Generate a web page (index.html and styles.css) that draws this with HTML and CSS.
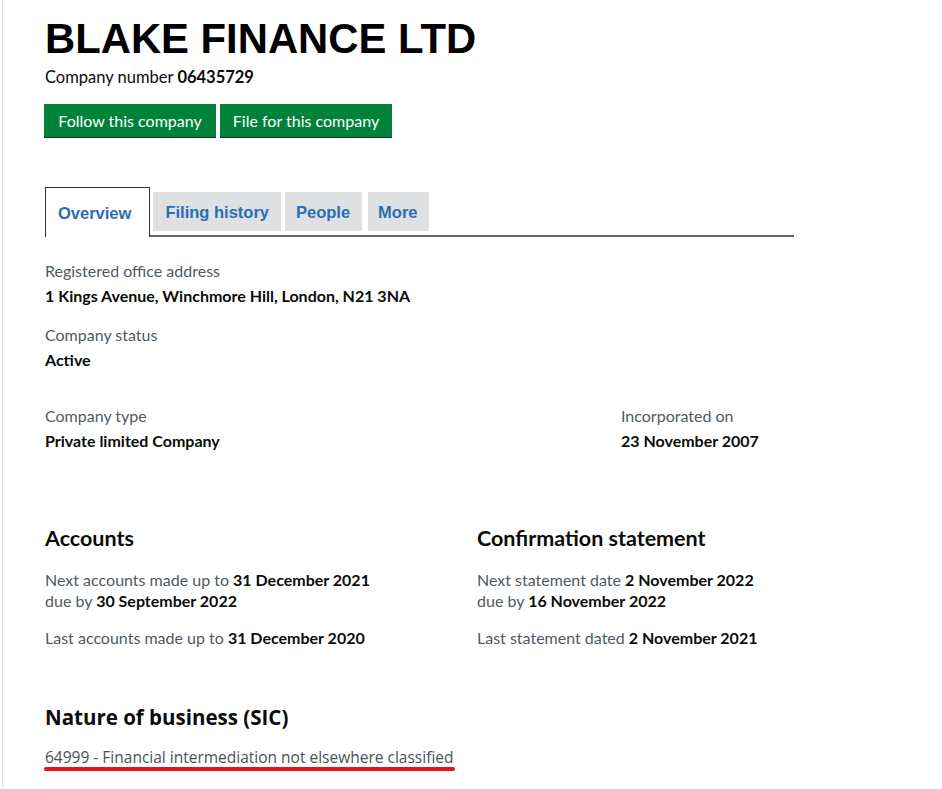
FILE: index.html
```html
<!DOCTYPE html>
<html lang="en">
<head>
<meta charset="utf-8">
<title>BLAKE FINANCE LTD</title>
<link rel="stylesheet" href="styles.css">
</head>
<body>
<div class="page">
  <h1 class="company-name">BLAKE FINANCE LTD</h1>
  <p class="company-number">Company number <strong>06435729</strong></p>
  <div class="actions">
    <a class="button" href="#">Follow this company</a>
    <a class="button" href="#">File for this company</a>
  </div>

  <ul class="tabs">
    <li class="tab tab-active"><a href="#">Overview</a></li>
    <li class="tab"><a href="#">Filing history</a></li>
    <li class="tab tab-people"><a href="#">People</a></li>
    <li class="tab tab-more"><a href="#">More</a></li>
  </ul>

  <div class="stack">
    <dl class="field">
      <dt>Registered office address</dt>
      <dd>1 Kings Avenue, Winchmore Hill, London, N21 3NA</dd>
    </dl>
    <dl class="field">
      <dt>Company status</dt>
      <dd>Active</dd>
    </dl>
  </div>

  <div class="row row-thirds">
    <dl class="field">
      <dt>Company type</dt>
      <dd>Private limited Company</dd>
    </dl>
    <dl class="field">
      <dt>Incorporated on</dt>
      <dd>23 November 2007</dd>
    </dl>
  </div>

  <div class="row row-halves">
    <section class="block">
      <h2 class="heading">Accounts</h2>
      <p class="line">Next accounts made up to <strong>31 December 2021</strong><br>due by <strong>30 September 2022</strong></p>
      <p class="line">Last accounts made up to <strong>31 December 2020</strong></p>
    </section>
    <section class="block">
      <h2 class="heading">Confirmation statement</h2>
      <p class="line">Next statement date <strong>2 November 2022</strong><br>due by <strong>16 November 2022</strong></p>
      <p class="line">Last statement dated <strong>2 November 2021</strong></p>
    </section>
  </div>

  <h2 class="heading heading-sic">Nature of business (SIC)</h2>
  <p class="sic"><span class="sic-item">64999 - Financial intermediation not elsewhere classified</span></p>
</div>
</body>
</html>
```

FILE: styles.css
```css
* { box-sizing: border-box; }

html, body {
  margin: 0;
  padding: 0;
  background: #ffffff;
}

body {
  font-family: "Lato", "Liberation Sans", Arial, sans-serif;
  color: #0b0c0c;
}

.page {
  margin-left: 2px;
  border-left: 1px solid #e6e6e6;
  padding-left: 42px;
  padding-top: 18px;
  min-height: 789px;
}

.company-name {
  font-family: "Liberation Sans", Arial, sans-serif;
  font-weight: 700;
  font-size: 41.8px;
  line-height: 42px;
  margin: 0;
  color: #000;
}

.company-number {
  margin: 6px 0 0;
  font-size: 16.5px;
  line-height: 22px;
  color: #0b0c0c;
}

.company-number strong { font-weight: 700; }

.actions {
  display: flex;
  gap: 4px;
  margin-top: 16px;
  margin-left: -1px;
}

.button {
  display: block;
  width: 172px;
  height: 33px;
  line-height: 33px;
  text-align: center;
  background: #00823b;
  color: #fff;
  text-decoration: none;
  font-size: 16px;
  box-shadow: 0 1px 0 #003618;
}

.tabs {
  list-style: none;
  margin: 50px 0 0;
  padding: 0;
  width: 749px;
  display: flex;
  align-items: flex-end;
  gap: 4px;
  border-bottom: 2px solid #666;
  height: 50px;
}

.tab {
  height: 39px;
  margin-bottom: 4px;
  background: #dee0e2;
  display: flex;
  align-items: center;
  padding-top: 2px;
}

.tab a {
  display: block;
  padding: 0 12px;
  font-family: "Liberation Sans", Arial, sans-serif;
  font-weight: 700;
  font-size: 16.5px;
  color: #2a6fb6;
  text-decoration: none;
}

.tab-people a { padding: 0 12px 0 11px; }

.tab-more { margin-left: 2px; }

.tab-more a { padding: 0 11px 0 10px; }

.tab-active {
  height: 50px;
  margin-bottom: -2px;
  margin-right: -1px;
  background: #fff;
  border: 1px solid #333;
  border-bottom: none;
  align-items: flex-start;
  padding-top: 16px;
}

.tab-active a { padding: 0 18px 0 12px; }

.field {
  margin: 0;
}

.field dt {
  font-size: 16px;
  line-height: 20px;
  color: #505a5f;
}

.field dd {
  margin: 5px 0 0;
  font-size: 16px;
  line-height: 20px;
  font-weight: 700;
  color: #0b0c0c;
}

.stack {
  display: flex;
  flex-direction: column;
  gap: 19px;
  margin-top: 24px;
}

.row {
  display: grid;
}

.row-thirds {
  grid-template-columns: 576px 1fr;
  margin-top: 36px;
}

.row-halves {
  grid-template-columns: 432px 1fr;
  margin-top: 74px;
}

.heading {
  margin: 0;
  font-size: 21.5px;
  line-height: 26px;
  font-weight: 700;
  color: #0b0c0c;
}

.line {
  margin: 18px 0 0;
  font-size: 16px;
  line-height: 21px;
  color: #505a5f;
}

.line strong { color: #0b0c0c; font-weight: 700; }

.line + .line { margin-top: 16px; }

.heading-sic {
  margin-top: 56px;
  font-family: "Open Sans", "Liberation Sans", sans-serif;
  font-size: 20.5px;
}

.sic {
  margin: 16px 0 0;
  font-family: "Open Sans", "Liberation Sans", sans-serif;
  font-size: 15.5px;
  line-height: 22px;
  color: #4a5257;
}

.sic-item {
  position: relative;
  display: inline-block;
}

.sic-item::after {
  content: "";
  position: absolute;
  left: -1px;
  right: -2px;
  bottom: -3px;
  height: 4px;
  border-radius: 2px;
  background: #e3141b;
}
```
